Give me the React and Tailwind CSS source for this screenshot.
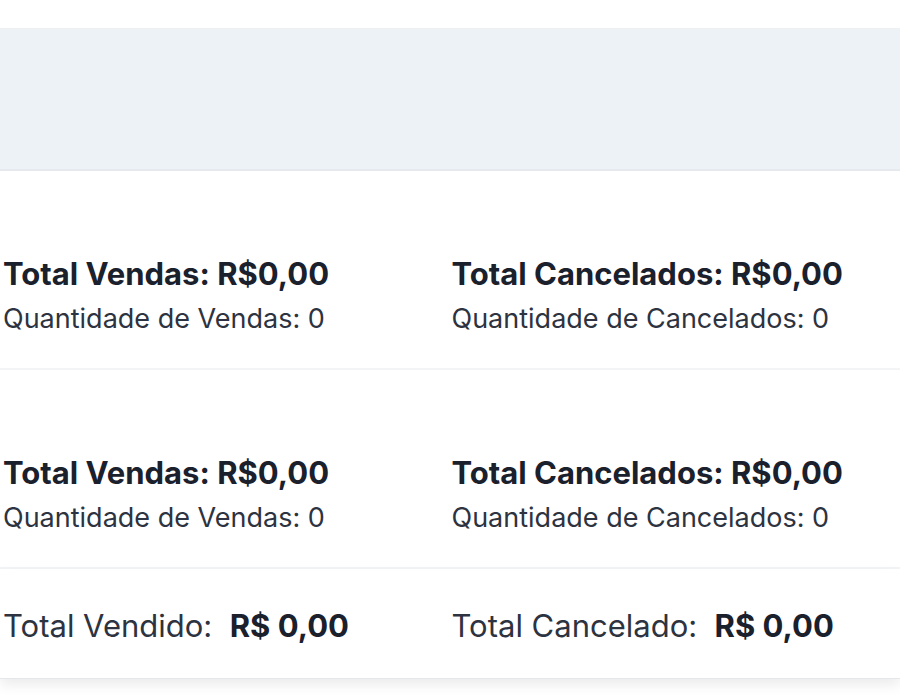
export default function App() {
  const rows = [
    { left: "Vendas", right: "Cancelados" },
    { left: "Vendas", right: "Cancelados" },
  ]

  return (
    <div className="w-[900px] h-[700px] overflow-hidden bg-white font-['Inter',sans-serif] text-[#1a202c]">
      {/* top spacer */}
      <div className="h-[29px] border-b border-[#eef0f2]" />

      {/* header band */}
      <div className="h-[142px] bg-[#edf2f6] border-b-2 border-[#e6e9ed]" />

      {/* summary rows */}
      {rows.map((row, i) => (
        <div
          key={i}
          className="h-[199px] border-b-2 border-[#f3f4f6] grid grid-cols-2 content-start pl-[3px] pt-[82px]"
        >
          <div>
            <p className="text-[31px] font-bold leading-[42px]">
              Total {row.left}: R$0,00
            </p>
            <p className="text-[27px] leading-[48px] text-[#2d3340]">
              Quantidade de {row.left}: 0
            </p>
          </div>
          <div>
            <p className="text-[31px] font-bold leading-[42px]">
              Total {row.right}: R$0,00
            </p>
            <p className="text-[27px] leading-[48px] text-[#2d3340]">
              Quantidade de {row.right}: 0
            </p>
          </div>
        </div>
      ))}

      {/* totals footer */}
      <div className="h-[110px] grid grid-cols-2 items-center pl-[3px] pt-[5px] shadow-[0_6px_12px_rgba(0,0,0,0.08)] border-b border-[#e5e7eb]">
        <p className="text-[31px] leading-[40px] text-[#2d3340]">
          Total Vendido:&nbsp; <span className="font-bold text-[#1a202c]">R$ 0,00</span>
        </p>
        <p className="text-[31px] leading-[40px] text-[#2d3340]">
          Total Cancelado:&nbsp; <span className="font-bold text-[#1a202c]">R$ 0,00</span>
        </p>
      </div>
    </div>
  )
}
